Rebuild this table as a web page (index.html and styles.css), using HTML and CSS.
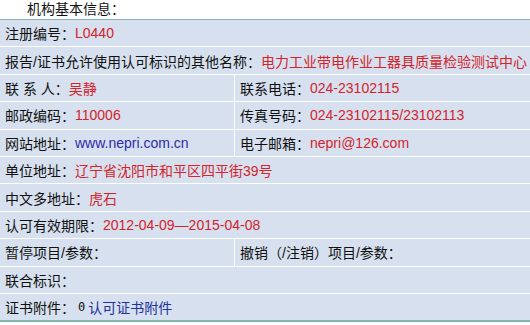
FILE: index.html
```html
<!DOCTYPE html>
<html>
<head>
<meta charset="utf-8">
<link rel="stylesheet" href="styles.css">
</head>
<body>
<div class="title">机构基本信息：</div>
<div class="info">
  <div class="row"><div class="cell">注册编号：<span class="val">L0440</span></div></div>
  <div class="row"><div class="cell">报告/证书允许使用认可标识的其他名称：<span class="val">电力工业带电作业工器具质量检验测试中心</span></div></div>
  <div class="row two"><div class="cell">联 系 人：<span class="val">吴静</span></div><div class="cell">联系电话：<span class="val">024-23102115</span></div></div>
  <div class="row two"><div class="cell">邮政编码：<span class="val">110006</span></div><div class="cell">传真号码：<span class="val">024-23102115/23102113</span></div></div>
  <div class="row two"><div class="cell">网站地址：<span class="link">www.nepri.com.cn</span></div><div class="cell">电子邮箱：<span class="val">nepri@126.com</span></div></div>
  <div class="row"><div class="cell">单位地址：<span class="val">辽宁省沈阳市和平区四平街39号</span></div></div>
  <div class="row"><div class="cell">中文多地址：<span class="val">虎石</span></div></div>
  <div class="row"><div class="cell">认可有效期限：<span class="val">2012-04-09—2015-04-08</span></div></div>
  <div class="row two"><div class="cell">暂停项目/参数：</div><div class="cell">撤销（/注销）项目/参数：</div></div>
  <div class="row"><div class="cell">联合标识：</div></div>
  <div class="row"><div class="cell">证书附件： <span class="zero">0</span> <span class="link2">认可证书附件</span></div></div>
</div>
</body>
</html>
```
FILE: styles.css
```css
html, body {
  margin: 0;
  padding: 0;
  background: #ffffff;
}
body {
  font-family: "Liberation Sans", "Noto Sans CJK SC", sans-serif;
  font-size: 14px;
  color: #111;
  width: 530px;
}
.title {
  height: 19px;
  line-height: 19px;
  padding-left: 27px;
  white-space: nowrap;
}
.info {
  border-top: 1px solid #86b6b4;
  border-bottom: 2px solid #86b6b4;
  background: #ffffff;
  display: grid;
  grid-auto-rows: 26.4px;
  row-gap: 1px;
}
.row {
  display: grid;
  grid-template-columns: 1fr;
}
.row.two {
  grid-template-columns: 234px 1fr;
  column-gap: 1px;
}
.cell {
  background: #d6e0ee;
  padding-left: 5px;
  display: flex;
  align-items: center;
  white-space: nowrap;
  overflow: hidden;
}
.val {
  color: #d4232b;
}
.link {
  color: #2c2ca8;
}
.link2 {
  color: #24329a;
}
.zero {
  font-family: "DejaVu Sans Mono", monospace;
  font-size: 12px;
  margin: 0 3px 0 3px;
}
```
